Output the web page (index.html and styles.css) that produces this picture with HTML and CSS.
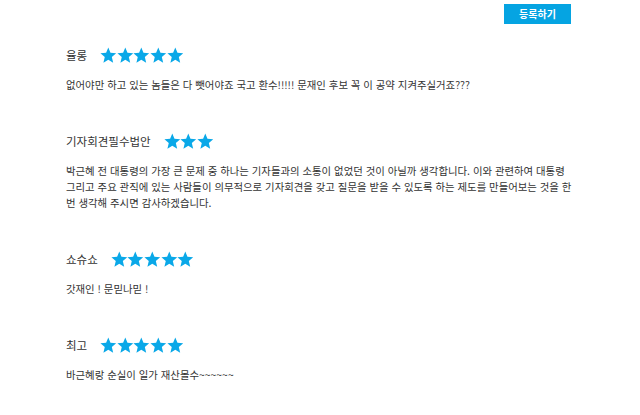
FILE: index.html
```html
<!DOCTYPE html>
<html lang="ko">
<head>
<meta charset="utf-8">
<link rel="stylesheet" href="styles.css">
</head>
<body>
<div class="page">
  <div class="toolbar"><button class="btn">등록하기</button></div>

  <div class="review">
    <div class="head">
      <span class="name">율롱</span>
      <span class="stars">
        <svg class="star" viewBox="0 0 16 16"><polygon points="8,0.6 10.1,5.6 15.6,6.1 11.4,9.7 12.7,15.1 8,12.2 3.3,15.1 4.6,9.7 0.4,6.1 5.9,5.6"/></svg>
        <svg class="star" viewBox="0 0 16 16"><polygon points="8,0.6 10.1,5.6 15.6,6.1 11.4,9.7 12.7,15.1 8,12.2 3.3,15.1 4.6,9.7 0.4,6.1 5.9,5.6"/></svg>
        <svg class="star" viewBox="0 0 16 16"><polygon points="8,0.6 10.1,5.6 15.6,6.1 11.4,9.7 12.7,15.1 8,12.2 3.3,15.1 4.6,9.7 0.4,6.1 5.9,5.6"/></svg>
        <svg class="star" viewBox="0 0 16 16"><polygon points="8,0.6 10.1,5.6 15.6,6.1 11.4,9.7 12.7,15.1 8,12.2 3.3,15.1 4.6,9.7 0.4,6.1 5.9,5.6"/></svg>
        <svg class="star" viewBox="0 0 16 16"><polygon points="8,0.6 10.1,5.6 15.6,6.1 11.4,9.7 12.7,15.1 8,12.2 3.3,15.1 4.6,9.7 0.4,6.1 5.9,5.6"/></svg>
      </span>
    </div>
    <p class="text">없어야만 하고 있는 놈들은 다 뺏어야죠 국고 환수!!!!! 문재인 후보 꼭 이 공약 지켜주실거죠???</p>
  </div>

  <div class="review">
    <div class="head">
      <span class="name">기자회견필수법안</span>
      <span class="stars">
        <svg class="star" viewBox="0 0 16 16"><polygon points="8,0.6 10.1,5.6 15.6,6.1 11.4,9.7 12.7,15.1 8,12.2 3.3,15.1 4.6,9.7 0.4,6.1 5.9,5.6"/></svg>
        <svg class="star" viewBox="0 0 16 16"><polygon points="8,0.6 10.1,5.6 15.6,6.1 11.4,9.7 12.7,15.1 8,12.2 3.3,15.1 4.6,9.7 0.4,6.1 5.9,5.6"/></svg>
        <svg class="star" viewBox="0 0 16 16"><polygon points="8,0.6 10.1,5.6 15.6,6.1 11.4,9.7 12.7,15.1 8,12.2 3.3,15.1 4.6,9.7 0.4,6.1 5.9,5.6"/></svg>
      </span>
    </div>
    <p class="text">박근혜 전 대통령의 가장 큰 문제 중 하나는 기자들과의 소통이 없었던 것이 아닐까 생각합니다. 이와 관련하여 대통령 그리고 주요 관직에 있는 사람들이 의무적으로 기자회견을 갖고 질문을 받을 수 있도록 하는 제도를 만들어보는 것을 한 번 생각해 주시면 감사하겠습니다.</p>
  </div>

  <div class="review">
    <div class="head">
      <span class="name">쇼슈쇼</span>
      <span class="stars">
        <svg class="star" viewBox="0 0 16 16"><polygon points="8,0.6 10.1,5.6 15.6,6.1 11.4,9.7 12.7,15.1 8,12.2 3.3,15.1 4.6,9.7 0.4,6.1 5.9,5.6"/></svg>
        <svg class="star" viewBox="0 0 16 16"><polygon points="8,0.6 10.1,5.6 15.6,6.1 11.4,9.7 12.7,15.1 8,12.2 3.3,15.1 4.6,9.7 0.4,6.1 5.9,5.6"/></svg>
        <svg class="star" viewBox="0 0 16 16"><polygon points="8,0.6 10.1,5.6 15.6,6.1 11.4,9.7 12.7,15.1 8,12.2 3.3,15.1 4.6,9.7 0.4,6.1 5.9,5.6"/></svg>
        <svg class="star" viewBox="0 0 16 16"><polygon points="8,0.6 10.1,5.6 15.6,6.1 11.4,9.7 12.7,15.1 8,12.2 3.3,15.1 4.6,9.7 0.4,6.1 5.9,5.6"/></svg>
        <svg class="star" viewBox="0 0 16 16"><polygon points="8,0.6 10.1,5.6 15.6,6.1 11.4,9.7 12.7,15.1 8,12.2 3.3,15.1 4.6,9.7 0.4,6.1 5.9,5.6"/></svg>
      </span>
    </div>
    <p class="text">갓재인 ! 문믿나믿 !</p>
  </div>

  <div class="review">
    <div class="head">
      <span class="name">최고</span>
      <span class="stars">
        <svg class="star" viewBox="0 0 16 16"><polygon points="8,0.6 10.1,5.6 15.6,6.1 11.4,9.7 12.7,15.1 8,12.2 3.3,15.1 4.6,9.7 0.4,6.1 5.9,5.6"/></svg>
        <svg class="star" viewBox="0 0 16 16"><polygon points="8,0.6 10.1,5.6 15.6,6.1 11.4,9.7 12.7,15.1 8,12.2 3.3,15.1 4.6,9.7 0.4,6.1 5.9,5.6"/></svg>
        <svg class="star" viewBox="0 0 16 16"><polygon points="8,0.6 10.1,5.6 15.6,6.1 11.4,9.7 12.7,15.1 8,12.2 3.3,15.1 4.6,9.7 0.4,6.1 5.9,5.6"/></svg>
        <svg class="star" viewBox="0 0 16 16"><polygon points="8,0.6 10.1,5.6 15.6,6.1 11.4,9.7 12.7,15.1 8,12.2 3.3,15.1 4.6,9.7 0.4,6.1 5.9,5.6"/></svg>
        <svg class="star" viewBox="0 0 16 16"><polygon points="8,0.6 10.1,5.6 15.6,6.1 11.4,9.7 12.7,15.1 8,12.2 3.3,15.1 4.6,9.7 0.4,6.1 5.9,5.6"/></svg>
      </span>
    </div>
    <p class="text">바근혜랑 순실이 일가 재산몰수~~~~~~</p>
  </div>
</div>
</body>
</html>
```

FILE: styles.css
```css
html, body {
  margin: 0;
  padding: 0;
  background: #fff;
}
body {
  font-family: "Noto Sans CJK KR", "Noto Sans", sans-serif;
  color: #333;
}
.page {
  width: 512px;
  margin-left: 66px;
  padding-top: 4px;
}
.toolbar {
  display: flex;
  justify-content: flex-end;
  padding-right: 7px;
}
.btn {
  width: 67px;
  height: 20px;
  border: 0;
  padding: 0;
  background: #05a4e2;
  color: #fff;
  font-family: "Noto Sans CJK KR", sans-serif;
  font-size: 10px;
  font-weight: 700;
  line-height: 20px;
}
.review {
  padding-top: 21px;
  margin-bottom: 17px;
}
.head {
  display: flex;
  align-items: center;
  height: 20px;
  gap: 13px;
}
.name {
  font-size: 11.5px;
  line-height: 20px;
}
.stars {
  display: flex;
}
.star {
  width: 16.6px;
  height: 16.6px;
  fill: #0aa8e8;
  display: block;
}
.text {
  margin: 12px 0 0;
  font-size: 10.4px;
  line-height: 16px;
  word-break: keep-all;
}
```
